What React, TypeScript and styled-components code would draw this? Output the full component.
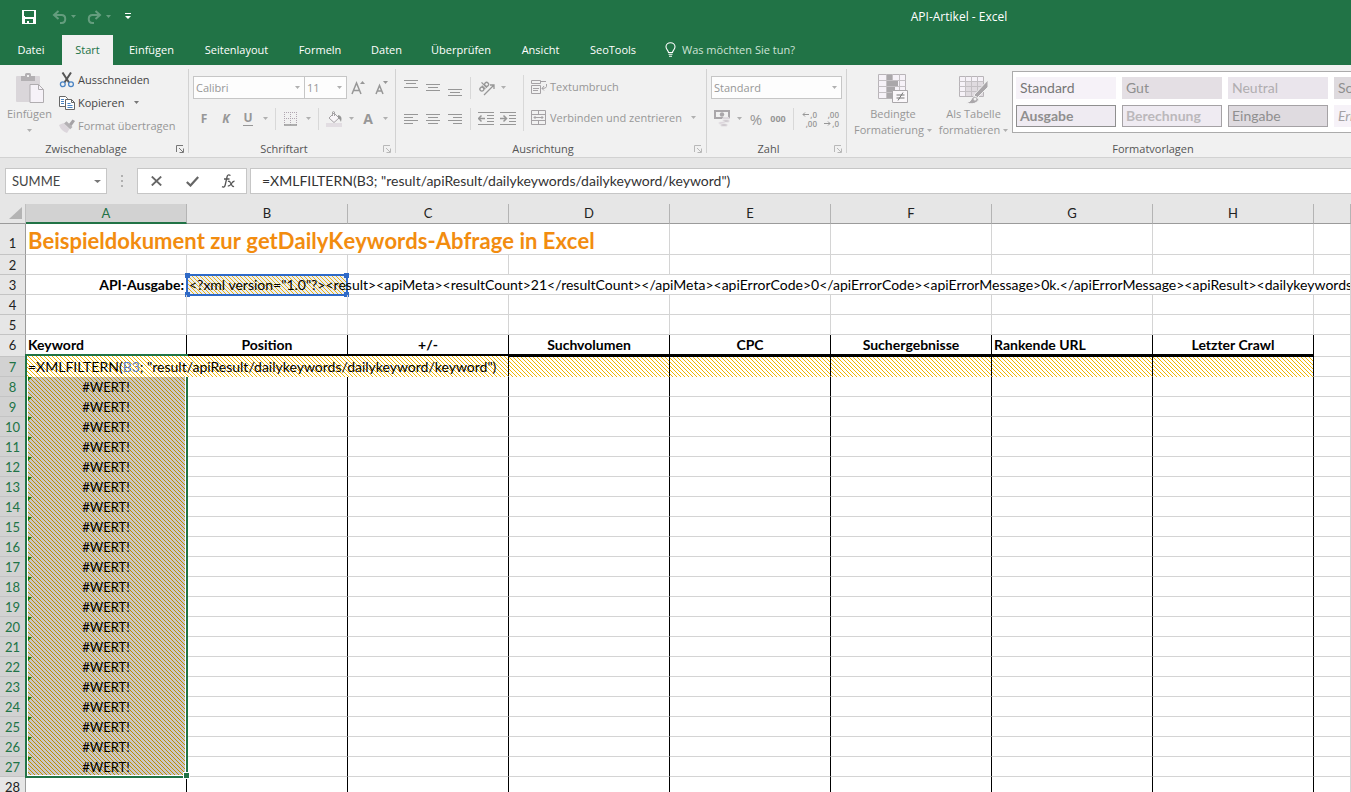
import React from "react";
import styled, { createGlobalStyle, css } from "styled-components";

const uiFont = '"Open Sans", "Noto Sans", sans-serif';
const cellFont = 'Lato, "Open Sans", sans-serif';

const GlobalStyle = createGlobalStyle`
  *, *::before, *::after { box-sizing: border-box; }
  html, body { margin: 0; height: 100%; overflow: hidden; }
  button, input, select { font: inherit; color: inherit; margin: 0; padding: 0; border: 0; background: none; border-radius: 0; outline: none; }
  svg { display: block; flex: none; }
`;

/* diagonal one-pixel hatch on a 4x4 vector tile; fixed, so it runs on from cell to cell */
const hatchTile = (line: string) =>
  `url("data:image/svg+xml,${encodeURIComponent(
    `<svg xmlns='http://www.w3.org/2000/svg' width='4' height='4' shape-rendering='crispEdges'><path fill='${line}' d='M0 0h1v1H0zM1 1h1v1H1zM2 2h1v1H2zM3 3h1v1H3z'/></svg>`
  )}")`;

const hatch = (line: string, ground: string) => css`
  background-color: ${ground};
  background-image: ${hatchTile(line)};
  background-size: 4px 4px;
  background-attachment: fixed;
`;

const Page = styled.div`
  display: flex;
  flex-direction: column;
  height: 100vh;
  overflow: hidden;
  background: #e6e6e6;
  font-family: ${uiFont};
  font-size: 11px;
  color: #444;
`;

/* ---------- title bar and tabs ---------- */

const TitleBar = styled.header`
  flex: none;
  display: flex;
  align-items: center;
  height: 35px;
  padding: 0 0 2px 21px;
  background: #217346;
  color: #fff;
`;

const QuickButton = styled.button<{ $w: number; $dim?: boolean }>`
  width: ${(p) => p.$w}px;
  height: 22px;
  display: flex;
  align-items: center;
  justify-content: ${(p) => (p.$dim ? "flex-end" : "center")};
  opacity: ${(p) => (p.$dim ? 0.3 : 1)};
`;

const WindowTitle = styled.div`
  flex: 1;
  padding-left: 426px;
  text-align: center;
  font-size: 12px;
  line-height: 16px;
`;

const TabBar = styled.nav`
  flex: none;
  display: flex;
  height: 30px;
  background: #217346;
  color: #fff;
`;

const Tab = styled.button<{ $w: number; $active?: boolean }>`
  flex: none;
  width: ${(p) => p.$w}px;
  padding-bottom: 2px;
  white-space: nowrap;
  text-align: center;
  background: ${(p) => (p.$active ? "#f1f1f1" : "transparent")};
  color: ${(p) => (p.$active ? "#217346" : "#fff")};
`;

const TellMe = styled.button`
  display: flex;
  align-items: center;
  gap: 6px;
  margin-left: 14px;
  padding-bottom: 2px;
  color: #cfe3d7;
  white-space: nowrap;
`;

/* ---------- ribbon ---------- */

const Ribbon = styled.section`
  flex: none;
  display: flex;
  height: 93px;
  padding-top: 4px;
  background: #f1f1f1;
  border-bottom: 1px solid #d2d2d2;
  overflow: hidden;
`;

const Group = styled.div<{ $w: number }>`
  flex: none;
  display: flex;
  flex-direction: column;
  width: ${(p) => p.$w}px;
  height: 84px;
  padding: 0 4px;
  border-right: 1px solid #d2d2d2;
`;

const GroupBody = styled.div`
  flex: none;
  display: flex;
  height: 72px;
`;

const GroupFoot = styled.div`
  flex: none;
  display: flex;
  align-items: center;
  height: 16px;
  line-height: 16px;
  color: #555;
`;

const GroupName = styled.span<{ $pad: number }>`
  flex: 1;
  text-align: center;
  padding-right: ${(p) => p.$pad}px;
`;

const Launcher = styled.button`
  width: 8px;
  height: 8px;
`;

const Stack = styled.div`
  display: flex;
  flex-direction: column;
  padding-left: 4px;
`;

const ToolLine = styled.div`
  display: flex;
  align-items: center;
  height: 31px;
  color: #979797;
`;

const ToolStack = styled.div<{ $indent?: boolean }>`
  display: flex;
  flex-direction: column;
  padding-top: 3px;
  padding-left: ${(p) => (p.$indent ? 3 : 0)}px;
`;

const Tool = styled.button<{ $w?: number }>`
  flex: none;
  width: ${(p) => p.$w ?? 22}px;
  height: 22px;
  display: flex;
  align-items: center;
  justify-content: center;
`;

const Letter = styled.span<{ $italic?: boolean; $under?: boolean; $size?: number; $light?: boolean }>`
  font-weight: ${(p) => (p.$light ? 400 : 700)};
  font-size: ${(p) => p.$size ?? 12}px;
  line-height: 14px;
  font-style: ${(p) => (p.$italic ? "italic" : "normal")};
  border-bottom: ${(p) => (p.$under ? "1px solid #979797" : "0")};
`;

const Divider = styled.span<{ $tall?: boolean }>`
  flex: none;
  width: 1px;
  height: ${(p) => (p.$tall ? 56 : 22)}px;
  margin: ${(p) => (p.$tall ? "6px 4px 0" : "0 4px")};
  background: #d8d8d8;
`;

const LabelTool = styled.button<{ $dim?: boolean }>`
  display: flex;
  align-items: center;
  gap: 3px;
  height: 23px;
  padding-bottom: 2px;
  white-space: nowrap;
  color: ${(p) => (p.$dim ? "#979797" : "#444")};
`;

const BigTool = styled.button<{ $w: number }>`
  flex: none;
  width: ${(p) => p.$w}px;
  height: 72px;
  display: flex;
  flex-direction: column;
  align-items: center;
  padding-top: 4px;
  color: #979797;
  line-height: 16px;
  white-space: nowrap;
  > svg { margin-bottom: 2px; }
`;

const BigLine = styled.span`
  display: flex;
  align-items: center;
  justify-content: center;
  gap: 3px;
  min-height: 16px;
`;

const SelectBox = styled.div<{ $w: number }>`
  position: relative;
  flex: none;
  width: ${(p) => p.$w}px;
  height: 23px;
  margin-right: -1px;
  border: 1px solid #c6c6c6;
  background: #fdfdfd;
  select {
    appearance: none;
    width: 100%;
    height: 100%;
    padding: 0 14px 0 2px;
    color: #979797;
  }
  svg {
    position: absolute;
    right: 4px;
    top: 9px;
    pointer-events: none;
  }
`;

const Gallery = styled.div`
  flex: 1;
  display: grid;
  grid-template-columns: repeat(4, 100px);
  grid-auto-rows: 22px;
  gap: 6px;
  height: 62px;
  margin-top: 2px;
  padding: 5px 3px;
  border: 1px solid #ababab;
  background: #fff;
  overflow: hidden;
`;

const StyleChip = styled.button<{ $bg: string; $fg: string; $edge?: string; $bold?: boolean; $italic?: boolean }>`
  font-family: ${cellFont};
  font-size: 14px;
  line-height: 18px;
  text-align: left;
  padding-left: ${(p) => (p.$edge ? 3 : 4)}px;
  padding-bottom: 1px;
  background: ${(p) => p.$bg};
  color: ${(p) => p.$fg};
  border: ${(p) => (p.$edge ? `1px solid ${p.$edge}` : "0")};
  font-weight: ${(p) => (p.$bold ? 700 : 400)};
  font-style: ${(p) => (p.$italic ? "italic" : "normal")};
  white-space: nowrap;
  overflow: hidden;
`;

/* ---------- formula bar ---------- */

const FormulaBar = styled.section`
  flex: none;
  display: flex;
  align-items: center;
  height: 46px;
  padding: 0 0 0 5px;
  font-family: ${cellFont};
  font-size: 13px;
  color: #444;
`;

const BarBox = styled.div<{ $w: number }>`
  display: flex;
  align-items: center;
  flex: none;
  width: ${(p) => p.$w}px;
  height: 26px;
  border: 1px solid #c6c6c6;
  background: #fff;
`;

const FormulaField = styled.div`
  flex: 1;
  display: flex;
  height: 26px;
  margin-left: 3px;
  padding-bottom: 2px;
  border: 1px solid #c6c6c6;
  border-right: 0;
  background: #fff;
  font-size: 14px;
  color: #333;
`;

const BarInput = styled.input<{ $pad: number }>`
  flex: 1;
  min-width: 0;
  height: 100%;
  padding-left: ${(p) => p.$pad}px;
`;

const Grip = styled.div`
  flex: none;
  width: 30px;
  display: flex;
  flex-direction: column;
  align-items: center;
  gap: 3px;
  i {
    width: 2px;
    height: 2px;
    background: #b0b0b0;
  }
`;

const BarButton = styled.button`
  flex: 1;
  height: 100%;
  display: flex;
  align-items: center;
  justify-content: center;
`;

/* ---------- sheet ---------- */

const SheetArea = styled.main`
  flex: 1;
  min-height: 0;
  overflow: hidden;
  background: #fff;
`;

const Sheet = styled.table`
  width: 100%;
  table-layout: fixed;
  border-collapse: separate;
  border-spacing: 0;
  font-family: ${cellFont};
  font-size: 13px;
  color: #000;
`;

const Corner = styled.td`
  height: 20px;
  padding: 0 3px 2px 0;
  background: #e6e6e6;
  border-right: 1px solid #c0c0c0;
  border-bottom: 1px solid #9b9b9b;
  svg { margin-left: auto; }
`;

const ColHead = styled.th<{ $on?: boolean }>`
  height: 20px;
  padding: 0;
  font-weight: 400;
  line-height: 18px;
  vertical-align: top;
  background: ${(p) => (p.$on ? "#d2d2d2" : "#e6e6e6")};
  color: ${(p) => (p.$on ? "#217346" : "#222")};
  border-right: 1px solid #b4b4b4;
  border-bottom: ${(p) => (p.$on ? "2px solid #217346" : "1px solid #9b9b9b")};
`;

const RowHead = styled.th<{ $on?: boolean; $h: number }>`
  height: ${(p) => p.$h}px;
  padding: 0 0 ${(p) => (p.$h > 20 ? 2 : 0)}px;
  font-weight: 400;
  line-height: 17px;
  vertical-align: bottom;
  background: ${(p) => (p.$on ? "#d2d2d2" : "#e6e6e6")};
  color: ${(p) => (p.$on ? "#217346" : "#222")};
  border-right: 1px solid #9b9b9b;
  border-bottom: 1px solid #c4c4c4;
`;

const Cell = styled.td<{ $table?: boolean; $align?: string; $fill?: "yellow" | "picked"; $under?: number }>`
  position: relative;
  padding: 0 2px;
  line-height: 17px;
  vertical-align: bottom;
  white-space: nowrap;
  text-align: ${(p) => p.$align ?? "left"};
  border-right: 1px solid ${(p) => (p.$table ? "#000" : "#d4d4d4")};
  border-bottom: ${(p) => (p.$under ? `${p.$under}px solid #000` : "1px solid #d4d4d4")};
  ${(p) => p.$fill === "yellow" && hatch("#f2b600", "#fff")}
  ${(p) => p.$fill === "picked" && hatch("#bf9000", "#c9c7c9")}
  ${(p) => p.$fill && "border-bottom-color: transparent;"}
`;

const Strong = styled.strong`
  font-size: 14px;
  font-weight: 700;
`;

const DocTitle = styled.h1`
  margin: 0;
  font-size: 22px;
  line-height: 27px;
  font-weight: 700;
  font-kerning: none;
  color: #f28c0f;
`;

const Spill = styled.div`
  position: relative;
  margin-right: -2px;
  overflow: hidden;
  font-size: 14px;
  line-height: 19px;
`;

const RefBox = styled.div`
  position: absolute;
  left: -1px;
  top: -1px;
  width: 162px;
  height: 22px;
  border: 2px solid #2f6ac7;
  ${hatch("#e8b416", "#e9edf4")}
  i {
    position: absolute;
    width: 5px;
    height: 5px;
    background: #2f6ac7;
  }
  i:nth-child(1) { left: -3px; top: -3px; }
  i:nth-child(2) { right: -3px; top: -3px; }
  i:nth-child(3) { left: -3px; bottom: -3px; }
  i:nth-child(4) { right: -3px; bottom: -3px; }
`;

const Selection = styled.div`
  position: absolute;
  z-index: 1;
  left: -1px;
  top: -3px;
  width: 163px;
  height: 424px;
  border: 2px solid #217346;
  box-shadow: inset 0 0 0 1px #fff;
  pointer-events: none;
  &::after {
    content: "";
    position: absolute;
    right: -4px;
    bottom: -3px;
    width: 7px;
    height: 7px;
    border: 1px solid #fff;
    background: #217346;
  }
`;

const CellEditor = styled.div`
  position: absolute;
  z-index: 2;
  left: 1px;
  right: 0;
  top: -1px;
  bottom: -1px;
  padding: 1px 0 0 1px;
  font-size: 14px;
  line-height: 20px;
  ${hatch("#f2b600", "#fff")}
  span { color: #5b7cc0; }
`;

const ErrorMark = styled.i`
  position: absolute;
  left: 1px;
  top: 0;
  border-top: 5px solid #107c10;
  border-right: 5px solid transparent;
`;

/* ---------- icons ---------- */

const Arrow = ({ color = "#b0b0b0", size = 5 }: { color?: string; size?: number }) => (
  <svg width={size} height={3} viewBox="0 0 6 3" fill={color} preserveAspectRatio="none"><path d="M0 0h6L3 3z" /></svg>
);

const SaveIcon = () => (
  <svg width="14" height="14" viewBox="0 0 14 14" fill="#fff" shapeRendering="crispEdges">
    <path fillRule="evenodd" d="M0 0h14v14H0zM2 1v5l1 1h8l1-1V1zM3 9v4h2v-2h2v2h4V9z" />
  </svg>
);

const UndoIcon = ({ flip }: { flip?: boolean }) => (
  <svg width="15" height="14" viewBox="0 0 15 14" fill="none" stroke="#fff" strokeWidth="2">
    <g transform={flip ? "matrix(-1 0 0 1 15 0)" : undefined}>
      <path d="M6.500 1 2 5l4.500 4M2 5h7.500c5 0 5 8 0 8H8" />
    </g>
  </svg>
);

const BulbIcon = () => (
  <svg width="11" height="15" viewBox="0 0 11 15" fill="none" stroke="#fff" strokeWidth="1.100">
    <path d="M3.500 10.500C3.500 8.500 1 7.500 1 4.800 1 2.400 3 .7 5.500.7S10 2.400 10 4.800c0 2.700-2.500 3.700-2.500 5.700zM3.500 12.300h4M4 14.200h3" />
  </svg>
);

const PasteIcon = () => (
  <svg width="30" height="31" viewBox="0 0 30 31">
    <rect x="1" y="3" width="24" height="26" rx="1" fill="#dad6da" />
    <path d="M6 3h4V1.500Q10 0 11.500 0h3Q16 0 16 1.500V3h4v5H6z" fill="#b3b0b3" />
    <rect x="12" y="2" width="2" height="2" fill="#f1f1f1" />
    <path d="M15 11.500h8.500l5 5v13H15z" fill="#f6f2f8" stroke="#b0adb0" />
    <path d="M23.500 11.500v5h5" fill="none" stroke="#b0adb0" />
  </svg>
);

const CutIcon = () => (
  <svg width="16" height="16" viewBox="0 0 16 16" fill="none">
    <path d="M3.500.5 10 10.500M12 .5 5.500 10.500" stroke="#555" strokeWidth="2" />
    <circle cx="3.800" cy="12.300" r="2.400" stroke="#4a84c4" strokeWidth="1.300" />
    <circle cx="12" cy="12.300" r="2.400" stroke="#4a84c4" strokeWidth="1.300" />
  </svg>
);

const CopyIcon = () => (
  <svg width="16" height="16" viewBox="0 0 16 16" fill="#fff" stroke="#666">
    <path d="M.5 1.500h6l2 2v8h-8z" />
    <path d="M2 4.500h3M2 6.500h3M2 8.500h3" stroke="#4a84c4" />
    <path d="M6.500 4.500h6l3 3v7h-9z" />
    <path d="M12.500 4.500v3h3" fill="none" />
    <path d="M8.500 8.500h3M8.500 10.500h5M8.500 12.500h5" stroke="#4a84c4" />
  </svg>
);

const PainterIcon = () => (
  <svg width="16" height="14" viewBox="0 0 16 14">
    <path d="M0 6 4.500 4l6 6L8 14Q2 12 0 6z" fill="#dcd6dc" />
    <path d="M5 4.500 7.500 2.200l6 5.800-2.300 2.200z" fill="#b3b0b3" />
    <path d="M10 5 13.500.5 16 2l-3.500 5z" fill="#a5a2a5" />
  </svg>
);

const LauncherIcon = ({ color }: { color: string }) => (
  <svg width="8" height="8" viewBox="0 0 8 8" fill="none" stroke={color}>
    <path d="M.5 7V.5H7M3 3l4 4M7.500 3.500v4h-4" />
  </svg>
);

const BordersIcon = () => (
  <svg width="14" height="14" viewBox="0 0 14 14" fill="none" stroke="#b0a6b0">
    <path d="M0 .5h14M0 6.500h14M.5 0v13M6.500 0v13M12.500 0v13" strokeDasharray="1 1" />
    <path d="M0 13h13" stroke="#979797" strokeWidth="1.500" />
  </svg>
);

const FillIcon = () => (
  <svg width="17" height="16" viewBox="0 0 17 16">
    <rect y="12" width="16" height="4" fill="#e2dde2" />
    <path d="m3 7 5-5 5 5-5 4.500z" fill="#f8f5f8" stroke="#a5a2a5" />
    <path d="M6.500 5V1Q8 0 8.500 1v4" fill="none" stroke="#a5a2a5" />
    <path d="M12 4q5 1 3 7-1-3-3-4z" fill="#979797" />
  </svg>
);

const GrowIcon = ({ shrink }: { shrink?: boolean }) => (
  <svg width="14" height="16" viewBox="0 0 14 16" fill="none" stroke="#979797" strokeWidth="1.500">
    <path d={shrink ? "m2 14 3.500-8.500L9 14M3.500 11h4" : "m1 14 4.500-11L10 14M2.500 10.500h6"} />
    <path d={shrink ? "M9 1h5l-2.500 3z" : "M9 4h5l-2.500-3z"} fill="#979797" stroke="none" />
  </svg>
);

const Lines = ({ rows }: { rows: [number, number, number][] }) => (
  <svg width="14" height="22" viewBox="0 0 14 22" fill="#979797" shapeRendering="crispEdges">
    {rows.map(([x, y, w]) => <rect key={y} x={x} y={y} width={w} height="1" />)}
  </svg>
);

const OrientIcon = () => (
  <svg width="17" height="16" viewBox="0 0 17 16" fill="none" stroke="#979797" strokeWidth="1.300">
    <g transform="rotate(-45 6 7)">
      <circle cx="3" cy="7" r="2" /><path d="M5.500 4.500V9.500M7.500 2v7.500" /><circle cx="9.700" cy="7" r="2" />
    </g>
    <path d="M6 15 15.500 5.500M12 5h4v4" />
  </svg>
);

const IndentIcon = ({ right }: { right?: boolean }) => (
  <svg width="16" height="14" viewBox="0 0 16 14" fill="none" stroke="#979797">
    <path d="M0 .5h16M9 3.500h7M9 6.500h7M9 9.500h7M0 12.500h16" />
    <path d={right ? "M0 6.500h6M3.500 3.500l3 3-3 3" : "M1 6.500h6M3.500 3.500l-3 3 3 3"} strokeWidth="1.500" />
  </svg>
);

const WrapIcon = () => (
  <svg width="16" height="16" viewBox="0 0 16 16" fill="none" stroke="#a5a2a5">
    <path d="M.5 1.500h9v3h-9zM10 2.500h5M.5 6.500h9v8h-9zM2 9.500h6M2 11.500h5M15.500 5v2.500q0 2-4.500 2M13 7l-2 2.500 2 2" />
  </svg>
);

const MergeIcon = () => (
  <svg width="16" height="16" viewBox="0 0 16 16" fill="none" stroke="#a5a2a5">
    <path d="M.5.5h14v14H.5zM.5 4.500h14M.5 10.500h14M7.500.5v4M7.500 10.500v4M3 7.500h9M4.500 6 3 7.500 4.500 9M10.500 6 12 7.500 10.500 9" />
  </svg>
);

const MoneyIcon = () => (
  <svg width="17" height="17" viewBox="0 0 17 17">
    <path fillRule="evenodd" d="M0 0h16v9H0zM2 2v5h12V2z" fill="#aaa7aa" />
    <circle cx="8" cy="4.500" r="2.200" fill="#aaa7aa" />
    <ellipse cx="12" cy="8.500" rx="3.500" ry="1.500" fill="#dcd6dc" stroke="#f1f1f1" strokeWidth=".6" />
    <ellipse cx="12" cy="11" rx="3.500" ry="1.500" fill="#cfcacf" stroke="#f1f1f1" strokeWidth=".6" />
    <ellipse cx="8" cy="13" rx="3.500" ry="1.500" fill="#dcd6dc" stroke="#f1f1f1" strokeWidth=".6" />
    <ellipse cx="10" cy="15" rx="3.500" ry="1.500" fill="#cfcacf" stroke="#f1f1f1" strokeWidth=".6" />
  </svg>
);

const DecimalTool = styled.span`
  display: flex;
  flex-direction: column;
  width: 16px;
  font-size: 8px;
  font-weight: 600;
  line-height: 9px;
  > span { display: flex; align-items: center; justify-content: flex-end; gap: 1px; height: 9px; }
`;

const SmallArrow = ({ right }: { right?: boolean }) => (
  <svg width="7" height="5" viewBox="0 0 7 5" fill="none" stroke="#979797">
    <path d={right ? "M0 2.500h6M4 .5l2 2-2 2" : "M1 2.500h6M3 .5l-2 2 2 2"} />
  </svg>
);

const CondIcon = () => (
  <svg width="31" height="31" viewBox="0 0 31 31">
    <path d="M.5 1.500h27v24H.5z" fill="#f6f2f8" stroke="#b8b4b8" />
    <path d="M.5 7.500h27M.5 13.500h27M.5 19.500h27M8.500 1v24M14.500 1v24M21.500 1v24" stroke="#c4c0c4" />
    <path d="M9 2h5v5H9zM9 8h11v5H9zM9 14h8v5H9zM9 20h5v5H9z" fill="#aaa7aa" />
    <path d="M14.500 17.500h15v12h-15z" fill="#fbf8fb" stroke="#aaa7aa" />
    <path d="M18.500 22h8M18.500 25h8M25 19.500l-5 8" stroke="#777" />
  </svg>
);

const TableIcon = () => (
  <svg width="30" height="31" viewBox="0 0 30 31">
    <path d="M.5 3.500h24v20H.5z" fill="#f6f2f8" stroke="#b8b4b8" />
    <path d="M7 9h17v14H7z" fill="#e0dbe0" />
    <path d="M.5 8.500h24M.5 13.500h24M.5 18.500h24M6.500 3v20M12.500 3v20M18.500 3v20" stroke="#c4c0c4" />
    <path d="M29 7v7L18 25l-3-3z" fill="#aaa7aa" stroke="#f1f1f1" />
    <path d="M7 30q5-1 6-5 2-3 5-1 3 3 0 5-4 3-11 1z" fill="#aaa7aa" stroke="#f1f1f1" />
    <circle cx="16" cy="26" r="1.500" fill="#f1f1f1" />
  </svg>
);

const FxIcon = () => (
  <svg width="14" height="14" viewBox="0 0 14 14" fill="none" stroke="#555" strokeWidth="1.300">
    <path d="M9.500 1.500Q6.700-.2 6 3L4.200 11Q3.500 14 1 12.700M3 5h5.500M7 7.500q1.500-.8 2.300 1L11 11.500q.8 1.500 2 .8M13.500 7.300q-1.500-.3-3 2.200t-3.700 2.700" />
  </svg>
);

/* ---------- data ---------- */

const tabs: [string, number][] = [
  ["Datei", 62], ["Start", 51], ["Einfügen", 77], ["Seitenlayout", 93], ["Formeln", 74],
  ["Daten", 59], ["Überprüfen", 90], ["Ansicht", 69], ["SeoTools", 76],
];

const columns = ["A", "B", "C", "D", "E", "F", "G", "H"];

const headings = ["Keyword", "Position", "+/-", "Suchvolumen", "CPC", "Suchergebnisse", "Rankende URL", "Letzter Crawl"];

const formula = '=XMLFILTERN(B3; "result/apiResult/dailykeywords/dailykeyword/keyword")';

const xml =
  '<?xml version="1.0"?><result><apiMeta><resultCount>21</resultCount></apiMeta><apiErrorCode>0</apiErrorCode><apiErrorMessage>0k.</apiErrorMessage><apiResult><dailykeywords><dailykeyword>';

const errorRows = Array.from({ length: 20 }, (_, n) => n + 8);

const EmptyCells = ({ count, table }: { count: number; table?: boolean }) => (
  <>{Array.from({ length: count }, (_, n) => <Cell key={n} $table={table} />)}</>
);

const Foot = ({ name, launcher }: { name: string; launcher?: string }) => (
  <GroupFoot>
    <GroupName $pad={launcher ? 8 : 0}>{name}</GroupName>
    {launcher && <Launcher aria-label={`${name} öffnen`}><LauncherIcon color={launcher} /></Launcher>}
  </GroupFoot>
);

const Picker = ({ label, value, w }: { label: string; value: string; w: number }) => (
  <SelectBox $w={w}>
    <select aria-label={label} defaultValue={value}><option>{value}</option></select>
    <Arrow />
  </SelectBox>
);

export default function App() {
  return (
    <Page>
      <GlobalStyle />
      <TitleBar>
        <QuickButton $w={16} aria-label="Speichern"><SaveIcon /></QuickButton>
        <QuickButton $w={42} $dim aria-label="Rückgängig"><UndoIcon /><Tool as="span" $w={12}><Arrow color="#fff" /></Tool></QuickButton>
        <QuickButton $w={35} $dim aria-label="Wiederholen"><UndoIcon flip /><Tool as="span" $w={12}><Arrow color="#fff" /></Tool></QuickButton>
        <QuickButton $w={27} aria-label="Symbolleiste anpassen">
          <svg width="6" height="7" viewBox="0 0 6 7" fill="#fff"><path d="M0 0h6v1H0zM0 3h6L3 6z" /></svg>
        </QuickButton>
        <WindowTitle>API-Artikel - Excel</WindowTitle>
      </TitleBar>
      <TabBar>
        {tabs.map(([name, w]) => <Tab key={name} $w={w} $active={name === "Start"}>{name}</Tab>)}
        <TellMe><BulbIcon />Was möchten Sie tun?</TellMe>
      </TabBar>

      <Ribbon>
        <Group $w={189}>
          <GroupBody>
            <BigTool $w={51}>
              <PasteIcon />
              <BigLine>Einfügen</BigLine>
              <BigLine><Arrow /></BigLine>
            </BigTool>
            <Stack>
              <LabelTool><CutIcon />Ausschneiden</LabelTool>
              <LabelTool><CopyIcon />Kopieren<Tool as="span" $w={18}><Arrow color="#777" /></Tool></LabelTool>
              <LabelTool $dim><PainterIcon />Format übertragen</LabelTool>
            </Stack>
          </GroupBody>
          <Foot name="Zwischenablage" launcher="#777" />
        </Group>

        <Group $w={207}>
          <GroupBody>
            <ToolStack>
              <ToolLine>
                <Picker label="Schriftart" value="Calibri" w={112} />
                <Picker label="Schriftgrad" value="11" w={43} />
                <Tool $w={24} aria-label="Schrift vergrößern"><GrowIcon /></Tool>
                <Tool aria-label="Schrift verkleinern"><GrowIcon shrink /></Tool>
              </ToolLine>
              <ToolLine>
                <Tool><Letter>F</Letter></Tool>
                <Tool><Letter $italic>K</Letter></Tool>
                <Tool><Letter $under>U</Letter></Tool>
                <Tool $w={12} aria-label="Unterstreichung"><Arrow /></Tool>
                <Divider />
                <Tool aria-label="Rahmen"><BordersIcon /></Tool>
                <Tool $w={12} aria-label="Rahmenarten"><Arrow /></Tool>
                <Divider />
                <Tool aria-label="Füllfarbe"><FillIcon /></Tool>
                <Tool $w={12} aria-label="Füllfarben"><Arrow /></Tool>
                <Tool><Letter $size={14}>A</Letter></Tool>
                <Tool $w={12} aria-label="Schriftfarben"><Arrow /></Tool>
              </ToolLine>
            </ToolStack>
          </GroupBody>
          <Foot name="Schriftart" launcher="#b8b8b8" />
        </Group>

        <Group $w={311}>
          <GroupBody>
            <ToolStack>
              <ToolLine>
                <Tool aria-label="Oben"><Lines rows={[[0, 3, 14], [2, 6, 10], [0, 10, 14]]} /></Tool>
                <Tool aria-label="Mitte"><Lines rows={[[0, 7, 14], [2, 10, 10], [0, 13, 14]]} /></Tool>
                <Tool aria-label="Unten"><Lines rows={[[0, 12, 14], [2, 15, 10], [0, 18, 14]]} /></Tool>
                <Divider />
                <Tool aria-label="Ausrichtung"><OrientIcon /></Tool>
                <Tool $w={12} aria-label="Ausrichtungen"><Arrow /></Tool>
              </ToolLine>
              <ToolLine>
                <Tool aria-label="Linksbündig"><Lines rows={[[0, 6, 14], [0, 9, 9], [0, 12, 14], [0, 15, 9]]} /></Tool>
                <Tool aria-label="Zentriert"><Lines rows={[[0, 6, 14], [2, 9, 10], [0, 12, 14], [2, 15, 10]]} /></Tool>
                <Tool aria-label="Rechtsbündig"><Lines rows={[[0, 6, 14], [5, 9, 9], [0, 12, 14], [5, 15, 9]]} /></Tool>
                <Divider />
                <Tool aria-label="Einzug verkleinern"><IndentIcon /></Tool>
                <Tool aria-label="Einzug vergrößern"><IndentIcon right /></Tool>
              </ToolLine>
            </ToolStack>
            <Divider $tall />
            <ToolStack $indent>
              <ToolLine><LabelTool $dim><WrapIcon />Textumbruch</LabelTool></ToolLine>
              <ToolLine><LabelTool $dim><MergeIcon />Verbinden und zentrieren<Tool as="span" $w={18}><Arrow /></Tool></LabelTool></ToolLine>
            </ToolStack>
          </GroupBody>
          <Foot name="Ausrichtung" launcher="#b8b8b8" />
        </Group>

        <Group $w={140}>
          <GroupBody>
            <ToolStack>
              <ToolLine><Picker label="Zahlenformat" value="Standard" w={131} /></ToolLine>
              <ToolLine>
                <Tool aria-label="Währung"><MoneyIcon /></Tool>
                <Tool $w={12} aria-label="Währungen"><Arrow /></Tool>
                <Tool><Letter $size={15} $light>%</Letter></Tool>
                <Tool><Letter $size={9}>000</Letter></Tool>
                <Divider />
                <Tool><DecimalTool><span><SmallArrow />,0</span><span>,00</span></DecimalTool></Tool>
                <Tool><DecimalTool><span>,00</span><span><SmallArrow right />,0</span></DecimalTool></Tool>
              </ToolLine>
            </ToolStack>
          </GroupBody>
          <Foot name="Zahl" launcher="#b8b8b8" />
        </Group>

        <Group $w={613}>
          <GroupBody>
            <BigTool $w={84}>
              <CondIcon />
              <BigLine>Bedingte</BigLine>
              <BigLine>Formatierung<Arrow /></BigLine>
            </BigTool>
            <BigTool $w={77}>
              <TableIcon />
              <BigLine>Als Tabelle</BigLine>
              <BigLine>formatieren<Arrow /></BigLine>
            </BigTool>
            <Gallery>
              <StyleChip $bg="#f6f2f8" $fg="#777">Standard</StyleChip>
              <StyleChip $bg="#e4dfe4" $fg="#8f8f8f">Gut</StyleChip>
              <StyleChip $bg="#eae5ec" $fg="#b0adb0">Neutral</StyleChip>
              <StyleChip $bg="#dedade" $fg="#8f8f8f">Schlecht</StyleChip>
              <StyleChip $bg="#efebf2" $fg="#8f8f8f" $edge="#8f8f8f" $bold>Ausgabe</StyleChip>
              <StyleChip $bg="#efebf2" $fg="#bbb8bb" $edge="#a5a2a5" $bold>Berechnung</StyleChip>
              <StyleChip $bg="#dfdbe0" $fg="#8f8f8f" $edge="#a5a2a5">Eingabe</StyleChip>
              <StyleChip $bg="#f6f2f8" $fg="#a5a2a5" $italic>Erklärender</StyleChip>
            </Gallery>
          </GroupBody>
          <Foot name="Formatvorlagen" />
        </Group>
      </Ribbon>

      <FormulaBar>
        <BarBox $w={102}>
          <BarInput $pad={6} aria-label="Namenfeld" defaultValue="SUMME" />
          <Tool $w={18} aria-label="Namen"><Arrow color="#777" size={7} /></Tool>
        </BarBox>
        <Grip><i /><i /><i /></Grip>
        <BarBox $w={110}>
          <BarButton aria-label="Abbrechen">
            <svg width="11" height="10" viewBox="0 0 11 10" stroke="#666" strokeWidth="1.800"><path d="m.8.5 9.400 9M10.200.5.8 9.500" /></svg>
          </BarButton>
          <BarButton aria-label="Eingeben">
            <svg width="13" height="11" viewBox="0 0 13 11" fill="none" stroke="#666" strokeWidth="2.200"><path d="m.8 6 3.700 3.500L12.200 1" /></svg>
          </BarButton>
          <BarButton aria-label="Funktion einfügen"><FxIcon /></BarButton>
        </BarBox>
        <FormulaField>
          <BarInput $pad={11} aria-label="Bearbeitungsleiste" defaultValue={formula} />
        </FormulaField>
      </FormulaBar>

      <SheetArea>
        <Sheet>
          <colgroup>
            <col width={26} />
            {columns.map((c) => <col key={c} width={161} />)}
            <col />
          </colgroup>
          <thead>
            <tr>
              <Corner><svg width="13" height="12" viewBox="0 0 13 12" fill="#b4b4b4"><path d="M13 0v12H0z" /></svg></Corner>
              {columns.map((c) => <ColHead key={c} scope="col" $on={c === "A"}>{c}</ColHead>)}
              <ColHead scope="col" aria-label="I" />
            </tr>
          </thead>
          <tbody>
            <tr>
              <RowHead $h={31}>1</RowHead>
              <Cell colSpan={4}><DocTitle>Beispieldokument zur getDailyKeywords-Abfrage in Excel</DocTitle></Cell>
              <EmptyCells count={5} />
            </tr>
            <tr><RowHead $h={20}>2</RowHead><EmptyCells count={9} /></tr>
            <tr>
              <RowHead $h={20}>3</RowHead>
              <Cell $align="right"><Strong>API-Ausgabe:</Strong></Cell>
              <Cell colSpan={8}>
                <RefBox><i /><i /><i /><i /></RefBox>
                <Spill>{xml}</Spill>
              </Cell>
            </tr>
            <tr><RowHead $h={20}>4</RowHead><EmptyCells count={9} /></tr>
            <tr><RowHead $h={20}>5</RowHead><EmptyCells count={9} /></tr>
            <tr>
              <RowHead $h={22}>6</RowHead>
              {headings.map((h, n) => (
                <Cell key={h} $table $under={3} $align={n === 0 || n === 6 ? "left" : "center"}><Strong>{h}</Strong></Cell>
              ))}
              <Cell />
            </tr>
            <tr>
              <RowHead $on $h={20}>7</RowHead>
              <Cell colSpan={3} $table>
                <Selection />
                <CellEditor>=XMLFILTERN(<span>B3</span>{formula.slice(14)}</CellEditor>
              </Cell>
              {headings.slice(3).map((h) => <Cell key={h} $table $fill="yellow" />)}
              <Cell />
            </tr>
            {errorRows.map((r) => (
              <tr key={r}>
                <RowHead $on $h={20}>{r}</RowHead>
                <Cell $table $align="center" $fill="picked"><ErrorMark />#WERT!</Cell>
                <EmptyCells count={7} table />
                <Cell />
              </tr>
            ))}
            <tr><RowHead $h={20}>28</RowHead><EmptyCells count={8} table /><Cell /></tr>
          </tbody>
        </Sheet>
      </SheetArea>
    </Page>
  );
}
